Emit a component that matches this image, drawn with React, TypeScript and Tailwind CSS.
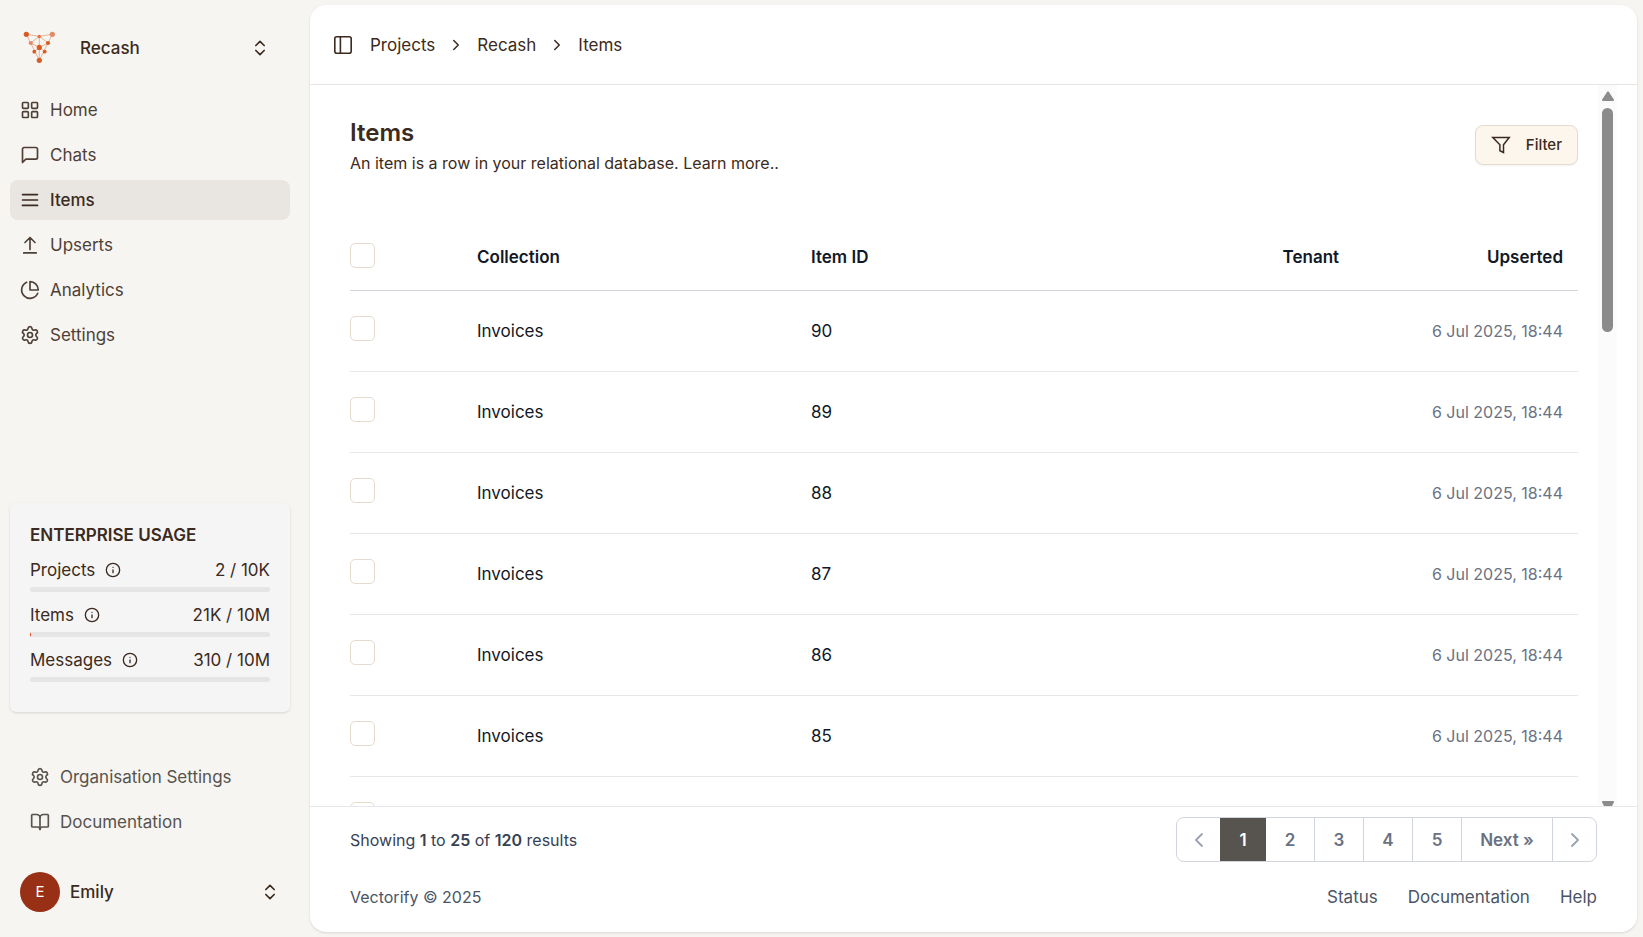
import { useState } from "react";
import type { ReactNode } from "react";
import {
    BookOpen,
    ChevronLeft,
    ChevronRight,
    ChevronsUpDown,
    Info,
    LayoutGrid,
    Settings,
} from "lucide-react";

interface UsageData {
    label: string;
    value: string;
    used: number;
    total: number;
}

interface ItemRow {
    id: number;
    collection: string;
    upserted: string;
}

const ICON = "size-5 shrink-0";

const USAGE: UsageData[] = [
    { label: "Projects", value: "2 / 10K", used: 2, total: 10000 },
    { label: "Items", value: "21K / 10M", used: 21000, total: 10000000 },
    { label: "Messages", value: "310 / 10M", used: 310, total: 10000000 },
];

const ROWS: ItemRow[] = [90, 89, 88, 87, 86, 85, 84].map((id) => ({
    id,
    collection: "Invoices",
    upserted: "6 Jul 2025, 18:44",
}));

// simple stroked icon on a 24 grid
function StrokeIcon({ d }: { d: string }) {
    return (
        <svg viewBox="0 0 24 24" className={ICON} fill="none" stroke="currentColor" strokeWidth="2" strokeLinecap="round" strokeLinejoin="round">
            <path d={d} />
        </svg>
    );
}

function FunnelIcon() {
    return (
        <svg viewBox="0 0 20 20" className={ICON} fill="none" stroke="currentColor" strokeWidth="1.5" strokeLinejoin="miter">
            <path d="M1.8 2.5h16.4l-5.7 7.2v7.8l-3.6-1.8v-6z" />
        </svg>
    );
}

function Logo() {
    return (
        <svg viewBox="0 0 40 40" className="size-10 shrink-0" fill="#d95a22" stroke="#e9a180">
            <path
                d="M6.3 6.3 19.3 32.3 32.3 6.3M6.3 6.3l13 2 13-2M19.3 8.3v24M10.7 15l8.6-6.7L28 15M10.7 15l8.6 4.3L28 15M14.3 23.7l5-4.4 5.4 4.4"
                fill="none"
                strokeWidth="0.8"
            />
            <g stroke="none">
                <circle cx="6.3" cy="6.3" r="2.6" />
                <circle cx="32.3" cy="6.3" r="2.6" fill="#e38a66" />
                <circle cx="19.3" cy="8.5" r="1.7" fill="#e0703f" />
                <circle cx="10.8" cy="15" r="2.1" fill="#e38a66" />
                <circle cx="28" cy="15" r="2.1" />
                <circle cx="19.3" cy="19.4" r="2.6" />
                <circle cx="14.3" cy="23.7" r="1.9" />
                <circle cx="24.7" cy="23.7" r="1.9" />
                <circle cx="19.3" cy="32.3" r="2.6" />
            </g>
        </svg>
    );
}

function NavItem({ icon, label, active = false }: { icon: ReactNode; label: string; active?: boolean }) {
    return (
        <a
            href="#"
            className={`flex h-10 items-center gap-2.5 rounded-lg px-2.5 ${active ? "bg-[#e9e6e2] font-medium text-[#3b2a20]" : "text-[#4f4037]"}`}
        >
            {icon}
            {label}
        </a>
    );
}

function UsageRow({ label, value, used, total }: UsageData) {
    const percent = (used / total) * 100;
    return (
        <div className="flex flex-col gap-[5px]">
            <div className="flex h-[35px] items-end justify-between">
                <span className="flex items-center gap-2.5">
                    {label}
                    <Info className="size-4" strokeWidth={2} />
                </span>
                <span>{value}</span>
            </div>
            <div className="h-[5px] overflow-hidden rounded-full bg-neutral-200">
                {percent > 0.1 && <div className="h-full min-w-px bg-[#dc4a1f]" style={{ width: `${percent}%` }} />}
            </div>
        </div>
    );
}

function Sidebar() {
    return (
        <aside className="flex w-[310px] shrink-0 flex-col pr-5 pl-2.5">
            <button className="mt-7 flex h-10 items-center pr-5 pl-2.5 text-left font-medium">
                <Logo />
                <span className="flex-1 pl-5">Recash</span>
                <ChevronsUpDown className={ICON} />
            </button>

            <nav className="mt-[22px] flex flex-col gap-[5px]">
                <NavItem icon={<LayoutGrid className={ICON} />} label="Home" />
                <NavItem icon={<StrokeIcon d="M21 15a2 2 0 0 1-2 2H7l-4 4V5a2 2 0 0 1 2-2h14a2 2 0 0 1 2 2z" />} label="Chats" />
                <NavItem icon={<StrokeIcon d="M3 5.5h18M3 12h18M3 18.5h18" />} label="Items" active />
                <NavItem icon={<StrokeIcon d="M12 17.5V3M6 9l6-6 6 6M4.5 21.5h15" />} label="Upserts" />
                <NavItem icon={<StrokeIcon d="M21.2 15.9A10 10 0 1 1 8 2.8M22 12A10 10 0 0 0 12 2v10z" />} label="Analytics" />
                <NavItem icon={<Settings className={ICON} />} label="Settings" />
            </nav>

            <section className="mt-auto rounded-md bg-neutral-100 px-5 pt-5 pb-[30px] shadow">
                <h2 className="font-semibold">ENTERPRISE USAGE</h2>
                {USAGE.map((usage) => (
                    <UsageRow key={usage.label} {...usage} />
                ))}
            </section>

            <nav className="mt-[45px] flex flex-col gap-[5px] px-2.5 text-[#57534e]">
                <a href="#" className="flex h-10 items-center gap-2.5 px-2.5">
                    <Settings className={ICON} />
                    Organisation Settings
                </a>
                <a href="#" className="flex h-10 items-center gap-2.5 px-2.5">
                    <BookOpen className={ICON} />
                    Documentation
                </a>
            </nav>

            <button className="mt-[30px] mb-[25px] flex h-10 items-center gap-2.5 px-2.5 text-left font-medium">
                <span className="flex size-10 items-center justify-center rounded-full bg-[#973015] text-[15px] font-normal text-white">E</span>
                <span className="flex-1">Emily</span>
                <ChevronsUpDown className={ICON} />
            </button>
        </aside>
    );
}

function Tick({ label }: { label: string }) {
    return (
        <input
            type="checkbox"
            aria-label={label}
            className="block size-[25px] appearance-none rounded-[5px] border border-[#e4dbcf] bg-white checked:bg-[#57534e]"
        />
    );
}

function ItemsTable() {
    return (
        <table className="mt-12 w-full table-fixed border-collapse text-left text-[#111827]">
            <thead>
                <tr className="h-[65px] border-b border-gray-300">
                    <th className="w-28 pb-1">
                        <Tick label="Select all" />
                    </th>
                    <th className="w-[27.2%] px-[15px] font-semibold">Collection</th>
                    <th className="w-[38.4%] px-[15px] font-semibold">Item ID</th>
                    <th className="px-[15px] font-semibold">Tenant</th>
                    <th className="px-[15px] text-right font-semibold">Upserted</th>
                </tr>
            </thead>
            <tbody>
                {ROWS.map((row) => (
                    <tr key={row.id} className="h-[81px] border-b border-gray-200">
                        <td className="pb-1">
                            <Tick label={`Select item ${row.id}`} />
                        </td>
                        <td className="px-[15px]">{row.collection}</td>
                        <td className="px-[15px]">{row.id}</td>
                        <td className="px-[15px] text-right text-base whitespace-nowrap text-gray-500" colSpan={2}>
                            {row.upserted}
                        </td>
                    </tr>
                ))}
            </tbody>
        </table>
    );
}

// slim rail at the right of the list
function ScrollRail() {
    return (
        <div className="mr-5 flex w-[19px] shrink-0 flex-col items-center overflow-hidden bg-[#fbfbfb] pt-1.5">
            <svg viewBox="0 0 12 10" className="h-2.5 w-3 shrink-0" fill="#8b8b8b">
                <path d="M5.2.7a1 1 0 0 1 1.6 0l5 7.8a1 1 0 0 1-.8 1.5H1a1 1 0 0 1-.8-1.5z" />
            </svg>
            <div className="mt-[7px] h-56 w-[11px] shrink-0 rounded-full bg-[#8b8b8b]" />
            <svg viewBox="0 0 12 5" className="mt-auto h-[5px] w-3 shrink-0" fill="#8b8b8b">
                <path d="M1 0h10a1 1 0 0 1 .8 1.5L10 5H2L.2 1.5A1 1 0 0 1 1 0z" />
            </svg>
        </div>
    );
}

function Pagination() {
    const [page, setPage] = useState(1);
    const cell = "flex items-center justify-center border-l border-gray-300";

    return (
        <nav className="flex h-[45px] overflow-hidden rounded-lg border border-gray-300 font-semibold text-gray-500">
            <button aria-label="Previous" className="flex w-[43px] items-center justify-center text-gray-400" onClick={() => setPage(Math.max(1, page - 1))}>
                <ChevronLeft className="size-6" strokeWidth={1.8} />
            </button>
            {[1, 2, 3, 4, 5].map((n) => (
                <button
                    key={n}
                    className={n === page ? "-my-px w-[46px] bg-[#57534e] text-white" : n === page + 1 ? "w-12" : `${cell} w-[49px]`}
                    onClick={() => setPage(n)}
                >
                    {n}
                </button>
            ))}
            <button className={`${cell} w-[91px]`} onClick={() => setPage(Math.min(5, page + 1))}>
                Next »
            </button>
            <button aria-label="Next" className={`${cell} w-11 text-gray-400`}>
                <ChevronRight className="size-6" strokeWidth={1.8} />
            </button>
        </nav>
    );
}

export default function App() {
    return (
        <div className="flex h-screen bg-[#f6f5f1] font-['Inter','Liberation_Sans',sans-serif] text-[17px] leading-6 text-[#3b2a20]">
            <Sidebar />

            <main className="my-[5px] mr-1.5 flex min-w-0 flex-1 flex-col rounded-2xl bg-white shadow">
                <header className="flex h-20 shrink-0 items-center gap-[17px] border-b border-[#e7e5df] px-[23px]">
                    <button aria-label="Toggle sidebar">
                        <svg viewBox="0 0 20 20" className={ICON} fill="none" stroke="currentColor" strokeWidth="1.6">
                            <rect x="1.8" y="1.8" width="16.4" height="16.4" rx="2" />
                            <path d="M7.4 1.8v16.4" />
                        </svg>
                    </button>
                    <nav className="flex items-center gap-3">
                        <a href="#">Projects</a>
                        <ChevronRight className="size-[18px]" />
                        <a href="#">Recash</a>
                        <ChevronRight className="size-[18px]" />
                        <span>Items</span>
                    </nav>
                </header>

                <div className="flex min-h-0 flex-1">
                    <div className="min-w-0 flex-1 overflow-hidden px-10 pr-5">
                        <div className="flex items-start justify-between pt-8">
                            <div>
                                <h1 className="text-2xl leading-8 font-semibold">Items</h1>
                                <p className="text-base leading-7">
                                    An item is a row in your relational database. <a href="#">Learn more..</a>
                                </p>
                            </div>
                            <button className="mt-2 flex h-10 items-center gap-[15px] rounded-lg border border-[#e4dbcf] bg-[#fdf6ed] px-[15px] text-[15px] font-medium shadow-xs">
                                <FunnelIcon />
                                Filter
                            </button>
                        </div>
                        <ItemsTable />
                    </div>
                    <ScrollRail />
                </div>

                <footer className="shrink-0 border-t border-gray-200 px-10 pt-2.5">
                    <div className="flex items-center justify-between text-gray-700">
                        <p className="text-base">
                            Showing <b className="font-semibold">1</b> to <b className="font-semibold">25</b> of <b className="font-semibold">120</b> results
                        </p>
                        <Pagination />
                    </div>
                    <div className="flex h-[70px] items-center justify-between text-gray-600">
                        <span className="text-base">Vectorify © 2025</span>
                        <nav className="flex gap-[30px]">
                            <a href="#">Status</a>
                            <a href="#">Documentation</a>
                            <a href="#">Help</a>
                        </nav>
                    </div>
                </footer>
            </main>
        </div>
    );
}
